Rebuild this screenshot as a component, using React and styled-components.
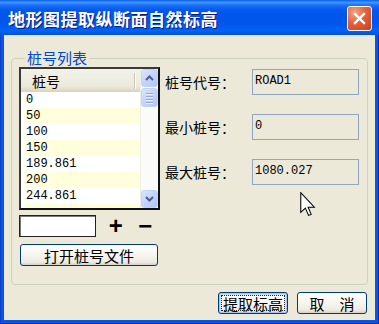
import React from 'react'
import styled, { createGlobalStyle, css } from 'styled-components'

const GlobalStyle = createGlobalStyle`
  html, body {
    margin: 0;
    padding: 0;
    background: #fff;
  }
  body {
    font-family: "Noto Sans CJK SC", "Noto Sans", sans-serif;
  }
`

const cjk = `"Noto Sans CJK SC", "Noto Sans", sans-serif`
const mono = `"Liberation Mono", "DejaVu Sans Mono", monospace`

const Window = styled.div`
  position: relative;
  width: 379px;
  height: 324px;
  display: flex;
  flex-direction: column;
  background: #0b53e0;
  box-shadow: inset 0 -1px #0a2fb0, inset 1px 0 #0a3fcf, inset -1px 0 #0a2fb0;
  overflow: hidden;
`

const TitleBar = styled.div`
  height: 35px;
  flex: none;
  display: flex;
  align-items: center;
  justify-content: space-between;
  padding: 2px 7px 0 8px;
  box-sizing: border-box;
  background: linear-gradient(180deg, #0a5ff0 0%, #3d95ff 7%, #1a6cf6 16%, #0058ee 30%, #0055ea 65%, #0063f6 88%, #0050dc 100%);
`

const Title = styled.div`
  color: #fff;
  font-family: ${cjk};
  font-weight: 700;
  font-size: 17px;
  letter-spacing: 0.5px;
  text-shadow: 1px 1px #0a1883;
`

const CloseBtn = styled.div`
  width: 25px;
  height: 25px;
  box-sizing: border-box;
  border: 1px solid #fff;
  border-radius: 3px;
  background: radial-gradient(circle at 30% 25%, #f4a585 0%, #e5603c 45%, #c8401d 100%);
  display: flex;
  align-items: center;
  justify-content: center;
`

const Body = styled.div`
  flex: 1;
  margin: 0 4px 4px;
  background: #ece9d8;
  display: flex;
  flex-direction: column;
  padding: 14px 7px 6px 7px;
  box-sizing: border-box;
`

const Group = styled.fieldset`
  margin: 0;
  padding: 0 8px 17px 7px;
  border: 1px solid #d0d0bf;
  border-radius: 4px;
  height: 236px;
  box-sizing: border-box;
`

const Legend = styled.legend`
  margin-left: 6px;
  padding: 0 2px;
  color: #0046d5;
  font-family: ${cjk};
  font-size: 15px;
  line-height: 18px;
`

const GroupInner = styled.div`
  display: grid;
  grid-template-columns: 141px 1fr;
  column-gap: 5px;
`

const LeftCol = styled.div`
  display: flex;
  flex-direction: column;
`

const ListBox = styled.div`
  height: 143px;
  box-sizing: border-box;
  border: 2px solid #1a1a1a;
  border-color: #3a3a3a #111 #111 #3a3a3a;
  display: flex;
  background: #fff;
  overflow: hidden;
`

const ListMain = styled.div`
  flex: 1;
  display: flex;
  flex-direction: column;
  overflow: hidden;
`

const Header = styled.div`
  height: 23px;
  flex: none;
  box-sizing: border-box;
  display: flex;
  align-items: center;
  background: linear-gradient(180deg, #f3f2ea 0%, #ebeadb 75%, #e2decd 88%, #d6d2c2 100%);
`

const HeaderCell = styled.div`
  width: 114px;
  box-sizing: border-box;
  padding-left: 11px;
  font-family: ${cjk};
  font-size: 14px;
  line-height: 16px;
  color: #000;
  border-right: 1px solid #c9c6b4;
  box-shadow: 1px 0 #fff;
`

const Row = styled.div`
  height: 16px;
  flex: none;
  line-height: 16px;
  margin-left: 4px;
  padding-left: 1px;
  font-family: ${mono};
  font-size: 12px;
  color: #000;
  background: ${p => (p.$alt ? '#ffffdb' : '#fff')};
`

const ScrollBar = styled.div`
  width: 17px;
  flex: none;
  display: flex;
  flex-direction: column;
  background: #fbfbf7;
  border-left: 1px solid #f0efe6;
`

const ScrollBtn = styled.div`
  height: ${p => p.$h || 18}px;
  box-sizing: border-box;
  border: 1px solid #c2d3fb;
  border-radius: 3px;
  background: linear-gradient(135deg, #d9e4fe 0%, #c3d4fc 50%, #b2c6f4 100%);
  display: flex;
  flex-direction: column;
  align-items: center;
  justify-content: center;
  gap: 2px;
  margin-top: ${p => p.$mt || 0}px;
`

const TrackSpace = styled.div`
  flex: 1;
`

const Grip = styled.div`
  width: 7px;
  height: 1px;
  background: #8ea7e0;
  box-shadow: 0 1px #eef3ff;
`

const InputRow = styled.div`
  display: flex;
  align-items: center;
  height: 22px;
  margin-top: 5px;
`

const SmallInput = styled.div`
  width: 78px;
  height: 22px;
  box-sizing: border-box;
  border: 1px solid #222;
  box-shadow: inset 1px 1px #7a7a7a;
  background: #fff;
`

const Sign = styled.span`
  width: 30px;
  text-align: center;
  font-family: "Liberation Sans", sans-serif;
  font-weight: 700;
  font-size: 24px;
  line-height: 22px;
  color: #000;
  &:first-of-type {
    margin-left: 5px;
  }
`

const XPButton = styled.div`
  height: 22px;
  width: ${p => p.$w}px;
  box-sizing: border-box;
  border: 1px solid #003c74;
  border-radius: 3px;
  background: linear-gradient(180deg, #ffffff 0%, #f7f6f1 45%, #ecebe4 85%, #d6d0c5 100%);
  display: flex;
  align-items: center;
  justify-content: center;
  font-family: ${cjk};
  font-size: 15px;
  color: #000;
  ${p =>
    p.$default &&
    css`
      box-shadow: inset 0 0 0 1px #a7c3f2, inset 0 0 0 2px #cfdefa;
      outline: 1px dotted #222;
      outline-offset: -4px;
    `}
`

const OpenButton = styled(XPButton)`
  margin-top: 7px;
  margin-left: 1px;
`

const FieldGrid = styled.div`
  display: grid;
  grid-template-columns: 87px 107px;
  row-gap: 19px;
  align-items: center;
  align-content: start;
  padding-top: 2px;
`

const Label = styled.div`
  font-family: ${cjk};
  font-size: 14px;
  color: #000;
`

const Field = styled.div`
  height: 26px;
  box-sizing: border-box;
  border: 1px solid #8fa7c1;
  background: #ece9d8;
  display: flex;
  align-items: center;
  padding: 0 0 2px 2px;
  font-family: ${mono};
  font-size: 12px;
  color: #000;
`

const ButtonRow = styled.div`
  display: flex;
  justify-content: flex-end;
  gap: 9px;
  margin-top: 7px;
  padding-right: 1px;
`

const Cursor = styled.svg`
  position: absolute;
  left: 300px;
  top: 192px;
`

const stations = ['0', '50', '100', '150', '189.861', '200', '244.861', '']

const fields = [
  ['桩号代号：', 'ROAD1'],
  ['最小桩号：', '0'],
  ['最大桩号：', '1080.027'],
]

const Chevron = ({ up }) => (
  <svg width="9" height="6" viewBox="0 0 9 6">
    <path
      d={up ? 'M1 5 L4.5 1.5 L8 5' : 'M1 1 L4.5 4.5 L8 1'}
      fill="none"
      stroke="#4d6185"
      strokeWidth="2"
    />
  </svg>
)

const App = () => {
  return (
    <>
      <GlobalStyle />
      <Window>
        <TitleBar>
          <Title>地形图提取纵断面自然标高</Title>
          <CloseBtn>
            <svg width="13" height="13" viewBox="0 0 13 13">
              <path d="M2 2 L11 11 M11 2 L2 11" stroke="#fff" strokeWidth="2.4" strokeLinecap="square" />
            </svg>
          </CloseBtn>
        </TitleBar>
        <Body>
          <Group>
            <Legend>桩号列表</Legend>
            <GroupInner>
              <LeftCol>
                <ListBox>
                  <ListMain>
                    <Header>
                      <HeaderCell>桩号</HeaderCell>
                    </Header>
                    {stations.map((s, i) => (
                      <Row key={i} $alt={i % 2 === 1}>{s}</Row>
                    ))}
                  </ListMain>
                  <ScrollBar>
                    <ScrollBtn><Chevron up /></ScrollBtn>
                    <ScrollBtn $h={19} $mt={1}>
                      <Grip /><Grip /><Grip /><Grip />
                    </ScrollBtn>
                    <TrackSpace />
                    <ScrollBtn><Chevron /></ScrollBtn>
                  </ScrollBar>
                </ListBox>
                <InputRow>
                  <SmallInput />
                  <Sign>+</Sign>
                  <Sign>−</Sign>
                </InputRow>
                <OpenButton $w={138}>打开桩号文件</OpenButton>
              </LeftCol>
              <FieldGrid>
                {fields.map(([label, value]) => (
                  <React.Fragment key={label}>
                    <Label>{label}</Label>
                    <Field>{value}</Field>
                  </React.Fragment>
                ))}
              </FieldGrid>
            </GroupInner>
          </Group>
          <ButtonRow>
            <XPButton $w={70} $default>提取标高</XPButton>
            <XPButton $w={70}>取　消</XPButton>
          </ButtonRow>
        </Body>
        <Cursor width="16" height="25" viewBox="0 0 12 19">
          <path
            d="M0.5 0.5 L0.5 15.5 L4 12.2 L6.4 17.8 L8.4 17 L6.1 11.6 L10.8 11.6 Z"
            fill="#fff"
            stroke="#000"
            strokeWidth="0.8"
            strokeLinejoin="miter"
          />
        </Cursor>
      </Window>
    </>
  )
}

export default App
